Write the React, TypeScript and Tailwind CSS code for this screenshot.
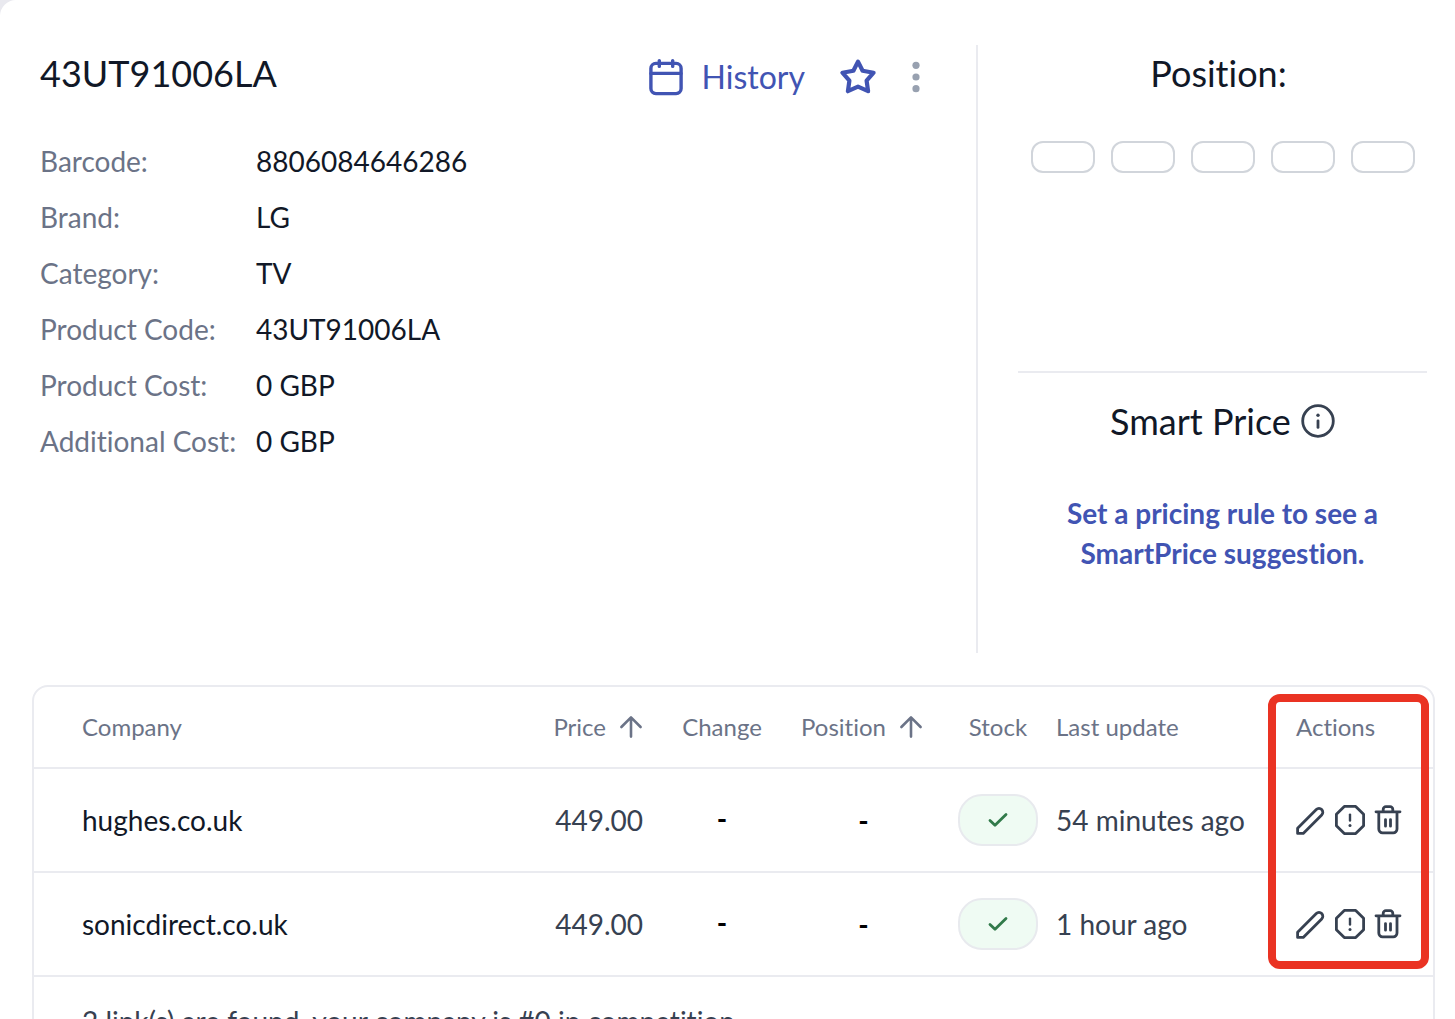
import React from 'react';

interface Detail {
  label: string;
  value: string;
}

interface CompanyRow {
  company: string;
  price: string;
  change: string;
  position: string;
  lastUpdate: string;
}

const details: Detail[] = [
  { label: 'Barcode:', value: '8806084646286' },
  { label: 'Brand:', value: 'LG' },
  { label: 'Category:', value: 'TV' },
  { label: 'Product Code:', value: '43UT91006LA' },
  { label: 'Product Cost:', value: '0 GBP' },
  { label: 'Additional Cost:', value: '0 GBP' },
];

const rows: CompanyRow[] = [
  { company: 'hughes.co.uk', price: '449.00', change: '-', position: '-', lastUpdate: '54 minutes ago' },
  { company: 'sonicdirect.co.uk', price: '449.00', change: '-', position: '-', lastUpdate: '1 hour ago' },
];

const positions = [1, 2, 3, 4, 5];

/* Icons */

const CalendarIcon = () => (
  <svg width="36" height="40" viewBox="0 0 36 40" fill="none" stroke="currentColor" strokeWidth="3.4" strokeLinecap="round">
    <rect x="2.9" y="6.4" width="30.2" height="30.2" rx="5" />
    <path d="M3 16.4h30M11.3 3.6v5.8M24.7 3.6v5.8" />
  </svg>
);

const StarIcon = () => (
  <svg width="40" height="40" viewBox="0 0 40 40" fill="none" stroke="currentColor" strokeWidth="4.2" strokeLinejoin="round">
    <path d="M20 4.6l4.6 9.2 11 1.9-7 7.9 1.5 10.6L20 29.7 9.9 34.2l1.5-10.6-7-7.9 11-1.9z" />
  </svg>
);

const DotsIcon = () => (
  <svg width="12" height="40" viewBox="0 0 12 40" fill="currentColor">
    <circle cx="6" cy="8.3" r="3.6" />
    <circle cx="6" cy="20" r="3.6" />
    <circle cx="6" cy="31.7" r="3.6" />
  </svg>
);

const InfoIcon = () => (
  <svg width="34" height="34" viewBox="0 0 34 34" fill="none" stroke="currentColor" strokeWidth="2.8" strokeLinecap="round">
    <circle cx="17" cy="17" r="15.3" />
    <path d="M17 16.8v6.6" />
    <circle cx="17" cy="11.3" r="1.7" fill="currentColor" stroke="none" />
  </svg>
);

const ArrowUpIcon = () => (
  <svg width="24" height="24" viewBox="0 0 24 24" fill="none" stroke="currentColor" strokeWidth="2.6" strokeLinecap="round" strokeLinejoin="round">
    <path d="M12 21.6V2.6M2.4 12L12 2.4l9.6 9.6" />
  </svg>
);

const CheckIcon = () => (
  <svg width="20" height="16" viewBox="0 0 20 16" fill="none" stroke="currentColor" strokeWidth="2.8" strokeLinecap="round" strokeLinejoin="round">
    <path d="M2 8.4l5 4.8L18 2.4" />
  </svg>
);

const PencilIcon = () => (
  <svg width="30" height="32" viewBox="0 0 30 32" fill="none" stroke="currentColor" strokeWidth="2.8" strokeLinejoin="round">
    <path d="M1.6 29.4v-5.2L20.3 5.5a3.8 3.8 0 0 1 5.4 5.4L7.2 29.4z" />
  </svg>
);

const ReportIcon = () => (
  <svg width="32" height="32" viewBox="0 0 32 32" fill="none" stroke="currentColor" strokeWidth="2.8" strokeLinecap="round" strokeLinejoin="round">
    <path d="M10.3 2.4h11.4l7.9 7.9v11.4l-7.9 7.9H10.3l-7.9-7.9V10.3z" />
    <path d="M16 10.6v6" strokeWidth="2.4" />
    <circle cx="16" cy="21.4" r="1.5" fill="currentColor" stroke="none" />
  </svg>
);

const TrashIcon = () => (
  <svg width="28" height="32" viewBox="0 0 28 32" fill="none" stroke="currentColor" strokeWidth="2.8" strokeLinecap="round" strokeLinejoin="round">
    <path d="M2 7.8h24M4.8 8v17a3.8 3.8 0 0 0 3.8 3.8h10.6A3.8 3.8 0 0 0 23 25V8" />
    <path d="M9.2 7.6V5.4a2.8 2.8 0 0 1 2.8-2.8h4a2.8 2.8 0 0 1 2.8 2.8v2.2M11.5 15.6v6.6M16.5 15.6v6.6" />
  </svg>
);

const App: React.FC = () => {
  return (
    <div className="h-screen overflow-hidden bg-[#e9e9ef] font-['Lato',sans-serif] text-[28px] leading-10 text-[#111827] [font-variant-ligatures:none]">
      <main className="min-h-screen rounded-tl-2xl bg-white pt-[45px]">
        <div className="flex min-h-[608px]">
          {/* Product details */}
          <section className="flex-1 pl-10 pr-[54px]">
            <div className="flex h-16 items-center justify-between">
              <h1 className="pb-2 text-4xl leading-12">43UT91006LA</h1>
              <div className="flex items-center text-[#4154b3]">
                <button type="button" className="flex items-center gap-[18px] text-[32px]">
                  <CalendarIcon />
                  History
                </button>
                <button type="button" aria-label="Add to favourites" className="ml-[33px]">
                  <StarIcon />
                </button>
                <button type="button" aria-label="More options" className="ml-8 text-[#98a1b0]">
                  <DotsIcon />
                </button>
              </div>
            </div>
            <dl className="mt-8 flex flex-col gap-4">
              {details.map((item) => (
                <div key={item.label} className="flex">
                  <dt className="w-[216px] shrink-0 text-[#6b7387]">{item.label}</dt>
                  <dd>{item.value}</dd>
                </div>
              ))}
            </dl>
          </section>

          {/* Position and smart price */}
          <aside className="w-[479px] border-l-2 border-[#eaebf0] pl-10 pr-7 text-center">
            <div className="h-[328px] border-b-2 border-[#eaebf0] pt-1">
              <h2 className="pr-2 text-4xl leading-12">Position:</h2>
              <div className="mt-11 flex justify-center gap-4">
                {positions.map((n) => (
                  <span key={n} className="h-8 w-16 rounded-xl border-2 border-[#d1d5db]"></span>
                ))}
              </div>
            </div>
            <h2 className="mt-6 flex items-center justify-center gap-[10px] text-4xl leading-12">
              Smart Price
              <button type="button" aria-label="About Smart Price" className="text-[#374151]">
                <InfoIcon />
              </button>
            </h2>
            <a href="#pricing-rule" className="mx-auto mt-12 block max-w-[340px] font-bold text-[#4154b3]">
              Set a pricing rule to see a SmartPrice suggestion.
            </a>
          </aside>
        </div>

        {/* Competitor links */}
        <div className="relative mt-8 ml-8 mr-5 rounded-t-2xl border-2 border-[#eaebf0]">
          <table className="w-full table-fixed">
            <colgroup>
              <col />
              <col className="w-[130px]" />
              <col className="w-[124px]" />
              <col className="w-[156px]" />
              <col className="w-[116px]" />
              <col className="w-[240px]" />
              <col className="w-[137px]" />
            </colgroup>
            <thead>
              <tr className="h-[81px] border-b-2 border-[#eaebf0] text-2xl text-[#6b7387]">
                <th className="pl-12 text-left font-normal">Company</th>
                <th className="pr-[17px] font-normal">
                  <button type="button" className="ml-auto flex items-center gap-[13px]">
                    Price <ArrowUpIcon />
                  </button>
                </th>
                <th className="font-normal">Change</th>
                <th className="font-normal">
                  <button type="button" className="mx-auto flex items-center gap-[13px]">
                    Position <ArrowUpIcon />
                  </button>
                </th>
                <th className="font-normal">Stock</th>
                <th className="text-left font-normal">Last update</th>
                <th className="text-left font-normal">Actions</th>
              </tr>
            </thead>
            <tbody>
              {rows.map((row) => (
                <tr key={row.company} className="h-[104px] border-b-2 border-[#eaebf0] text-[#374151]">
                  <td className="pl-12 text-[#111827]">{row.company}</td>
                  <td className="pr-[17px] text-right">{row.price}</td>
                  <td className="pb-1 text-center font-bold text-black">{row.change}</td>
                  <td className="pl-[3px] text-center font-bold text-black">{row.position}</td>
                  <td>
                    <span className="mx-auto flex h-[52px] w-20 items-center justify-center rounded-3xl border-2 border-[#e8eaee] bg-[#effbf3] text-[#317a4a]">
                      <CheckIcon />
                    </span>
                  </td>
                  <td>{row.lastUpdate}</td>
                  <td>
                    <div className="flex items-center gap-2">
                      <button type="button" aria-label={`Edit ${row.company}`}>
                        <PencilIcon />
                      </button>
                      <button type="button" aria-label={`Report ${row.company}`}>
                        <ReportIcon />
                      </button>
                      <button type="button" aria-label={`Delete ${row.company}`}>
                        <TrashIcon />
                      </button>
                    </div>
                  </td>
                </tr>
              ))}
            </tbody>
          </table>
          <p className="px-12 py-6 text-[#374151]">2 link(s) are found, your company is #0 in competition.</p>

          {/* Highlight around the actions column */}
          <div className="pointer-events-none absolute top-[7px] right-1 h-[275px] w-[161px] rounded-xl border-8 border-[#ea3323]"></div>
        </div>
      </main>
    </div>
  );
};

export default App;
